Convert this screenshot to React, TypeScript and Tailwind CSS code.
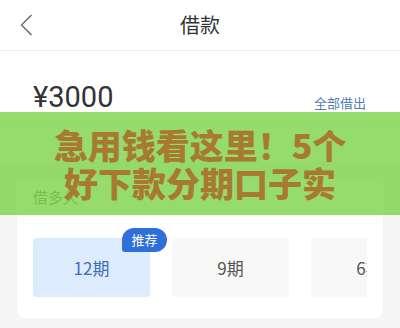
import React from 'react';

const terms = [
  { label: '12期', active: true },
  { label: '9期', active: false },
  { label: '6期', active: false },
];

const App: React.FC = () => {
  return (
    <div
      className="relative w-[400px] h-[328px] overflow-hidden bg-[#f5f5f5]"
      style={{ fontFamily: '"Noto Sans CJK SC", "Noto Sans", sans-serif' }}
    >
      {/* Header */}
      <div className="h-[51px] bg-white border-b border-[#ededed] flex items-center px-[20px]">
        <svg width="13" height="22" viewBox="0 0 13 22" fill="none" className="shrink-0">
          <path d="M11.5 1 L1.5 11 L11.5 21" stroke="#666" strokeWidth="1.4" />
        </svg>
        <div className="flex-1 text-center text-[20px] text-[#333] pr-[13px] leading-none">借款</div>
      </div>

      {/* Amount */}
      <div className="bg-white h-[111px] flex flex-col">
        <div className="h-[74px] px-[33px] flex items-end justify-between border-b border-[#eeeeee]">
          <span
            className="text-[29px] text-[#333] leading-none mb-[12px]"
            style={{ fontFamily: 'Roboto, "Noto Sans", sans-serif' }}
          >
            ¥3000
          </span>
          <span className="text-[13px] text-[#4d7fb3] leading-none mb-[15px] mr-[1px]">全部借出</span>
        </div>
      </div>

      {/* Term card */}
      <div className="mx-[17px] mt-[16px] h-[140px] rounded-[8px] bg-white px-[16px] pt-[10px]">
        <div className="text-[15px] text-[#666] leading-[18px]">借多久</div>
        <div className="mt-[20px] pt-[12px] flex gap-[22px] overflow-hidden">
          {terms.map((t) => (
            <div
              key={t.label}
              className={
                t.active
                  ? 'relative shrink-0 w-[117px] h-[59px] rounded-[4px] bg-[#dcebfd] flex items-center justify-center text-[17px] text-[#3f6fb8]'
                  : 'relative shrink-0 w-[117px] h-[59px] rounded-[4px] bg-[#f8f8f8] flex items-center justify-center text-[17px] text-[#555]'
              }
            >
              {t.label}
              {t.active && (
                <span className="absolute right-[-17px] top-[-10px] w-[45px] h-[24px] rounded-[12px] rounded-bl-[3px] bg-[#2f6fd8] text-white text-[13px] flex items-center justify-center">
                  推荐
                </span>
              )}
            </div>
          ))}
        </div>
      </div>

      {/* Overlay banner */}
      <div className="absolute left-0 right-0 top-[112px] h-[103px] bg-[rgba(122,210,72,0.8)] flex flex-col items-center justify-center">
        <div className="text-[34px] leading-[38px] font-black text-[#a87a30] text-center">
          <div>急用钱看这里！5个</div>
          <div>好下款分期口子实</div>
        </div>
      </div>
    </div>
  );
};

export default App;
